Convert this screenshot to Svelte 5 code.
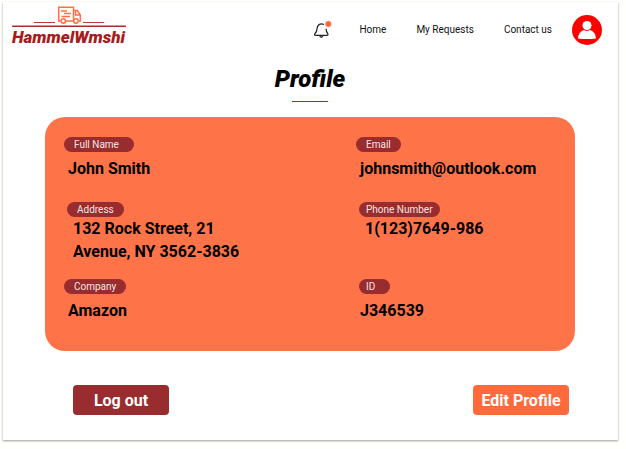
<script>
  const links = ['Home', 'My Requests', 'Contact us'];
  const columns = [
    [
      { label: 'Full Name', lines: ['John Smith'], size: 'wide' },
      { label: 'Address', lines: ['132 Rock Street, 21', 'Avenue, NY 3562-3836'], size: 'inset tight' },
      { label: 'Company', lines: ['Amazon'], size: '' }
    ],
    [
      { label: 'Email', lines: ['johnsmith@outlook.com'], size: '' },
      { label: 'Phone Number', lines: ['1(123)7649-986'], size: 'inset snug tight' },
      { label: 'ID', lines: ['J346539'], size: 'inset snug wide' }
    ]
  ];
</script>

<div class="page">
  <header>
    <a class="logo" href="#home">
      <svg viewBox="0 0 114 22" aria-hidden="true">
        <path d="M22 17.5H43M71 17.5H92" stroke="#b93a35" stroke-width="1" />
        <path d="M0 21.3H114" stroke="#b02a2a" stroke-width="1.400" />
        <g fill="none" stroke="#ff7046" stroke-width="1.500">
          <path d="M48.500 16H46.700V2.200H61.500V16H54M61.500 5.500H65.300L68.300 10V16H66.500M60.500 16H62M63.500 6V10H68M49 6H55M52 8.500H59M49.500 11.500H58" />
          <circle cx="51.300" cy="16" r="2.200" />
          <circle cx="64" cy="16" r="2.200" />
        </g>
      </svg>
      <span>HammelWmshi</span>
    </a>
    <nav>
      <button class="bell" aria-label="Notifications">
        <svg viewBox="0 0 20 20" aria-hidden="true">
          <g fill="none" stroke="#25252f" stroke-width="1.300" stroke-linejoin="round">
            <path d="M11 4.500C7 2.800 4.300 5.200 4.100 8.300C4 11 3.500 12.200 2 13.500C1.300 14.700 1.500 15.300 2.500 15.300H14C15.200 15.300 15.300 14.300 14.500 13.300C13.300 12 13.200 11 13.100 8.800" />
            <path d="M6.500 15.500Q8.300 19 10.100 15.500" />
          </g>
          <circle cx="15.300" cy="4" r="3" fill="#ff6a3d" />
        </svg>
      </button>
      {#each links as link}
        <a href="#{link.toLowerCase().replace(' ', '-')}">{link}</a>
      {/each}
      <button class="avatar" aria-label="Account">
        <svg viewBox="0 0 30 30" aria-hidden="true">
          <circle cx="15" cy="15" r="15" fill="#f00" />
          <circle cx="15" cy="10.500" r="4.500" fill="#fff" />
          <path d="M6 23.500C6.300 18.300 9 15.700 12 14.900Q15 17 18 14.900C21 15.700 23.700 18.300 24 23.500Q15 24.500 6 23.500Z" fill="#fff" />
        </svg>
      </button>
    </nav>
  </header>

  <main>
    <h1>Profile</h1>
    <section class="details">
      {#each columns as column}
        <dl>
          {#each column as field}
            <div class="field {field.size}">
              <dt>{field.label}</dt>
              <dd>
                {#each field.lines as line}<span>{line}</span>{/each}
              </dd>
            </div>
          {/each}
        </dl>
      {/each}
    </section>
    <div class="actions">
      <button class="logout">Log out</button>
      <button class="edit">Edit Profile</button>
    </div>
  </main>
</div>

<style>
  :global(body) {
    background: #fffffb;
    font-family: Roboto, 'Liberation Sans', sans-serif;
    color: #000;
  }
  .page {
    margin: 2px 8px 8px 3px;
    padding-bottom: 25px;
    background: #fff;
    box-shadow: 0 1px 2px #0006;
  }
  button {
    border: 0;
    padding: 0;
    background: none;
    font-family: inherit;
    cursor: pointer;
  }
  svg {
    display: block;
    width: 100%;
  }
  header {
    display: flex;
    justify-content: space-between;
    align-items: flex-start;
    padding: 3px 16px 0 9px;
  }
  .logo {
    width: 114px;
    color: #a61c1c;
    font: italic 900 17px/20px Roboto, sans-serif;
    text-decoration: none;
  }
  nav {
    display: flex;
    align-items: center;
    padding-top: 10px;
  }
  nav a {
    margin-right: 30px;
    color: #111;
    font-size: 10px;
    line-height: 14px;
    text-decoration: none;
  }
  nav a:last-of-type {
    margin-right: 20px;
  }
  .bell {
    width: 20px;
    margin-right: 26px;
  }
  .avatar {
    width: 30px;
  }
  main {
    padding: 0 43px 0 42px;
  }
  h1 {
    display: flex;
    flex-direction: column;
    align-items: center;
    gap: 8px;
    margin: 18px 0 15px;
    font: italic 900 24px/28px Roboto, sans-serif;
  }
  h1::after {
    content: '';
    width: 36px;
    height: 1px;
    background: #a12c2e;
  }
  .details {
    display: grid;
    grid-template-columns: 4fr 3fr;
    padding: 20px 0 27px 19px;
    border-radius: 20px;
    background: #ff7348;
  }
  dl {
    display: grid;
    grid-template-rows: 65px 77px 45px;
    margin: 0;
  }
  dt {
    width: fit-content;
    padding: 0 10px;
    border-radius: 8px;
    background: #982c2e;
    color: #f5e5e2;
    font-size: 10px;
    line-height: 15px;
  }
  .inset dt {
    margin-left: 3px;
  }
  .snug dt {
    padding: 0 7px;
  }
  .wide dt {
    padding-right: 15px;
  }
  dd {
    margin: 0 0 0 4px;
    padding-top: 5px;
    font-size: 16px;
    font-weight: 700;
    line-height: 23px;
  }
  .tight dd {
    margin-left: 9px;
    padding-top: 0;
  }
  dd span {
    display: block;
  }
  .actions {
    display: flex;
    justify-content: space-between;
    padding: 34px 6px 0 28px;
  }
  .actions button {
    width: 96px;
    height: 30px;
    border-radius: 4px;
    color: #fff;
    font-size: 16px;
    font-weight: 700;
  }
  .actions .logout {
    background: #982c2e;
  }
  .actions .edit {
    background: #ff6a3d;
  }
</style>
